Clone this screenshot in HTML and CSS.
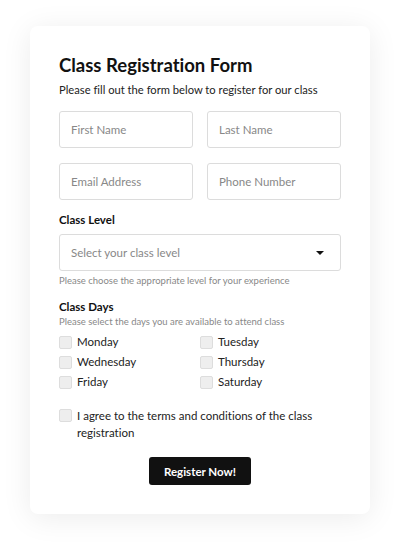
FILE: index.html
```html
<!DOCTYPE html>
<html>
<head>
<meta charset="utf-8">
<link rel="stylesheet" href="styles.css">
</head>
<body>
<div class="page">
  <form class="card">
    <h1 class="title">Class Registration Form</h1>
    <p class="subtitle">Please fill out the form below to register for our class</p>
    <div class="row first">
      <div class="input">First Name</div>
      <div class="input">Last Name</div>
    </div>
    <div class="row">
      <div class="input">Email Address</div>
      <div class="input">Phone Number</div>
    </div>
    <div class="label">Class Level</div>
    <div class="select">
      <span>Select your class level</span>
      <span class="caret"></span>
    </div>
    <div class="help">Please choose the appropriate level for your experience</div>
    <div class="label days-label">Class Days</div>
    <div class="help days-help">Please select the days you are available to attend class</div>
    <div class="days">
      <div class="check"><span class="box"></span><span>Monday</span></div>
      <div class="check"><span class="box"></span><span>Tuesday</span></div>
      <div class="check"><span class="box"></span><span>Wednesday</span></div>
      <div class="check"><span class="box"></span><span>Thursday</span></div>
      <div class="check"><span class="box"></span><span>Friday</span></div>
      <div class="check"><span class="box"></span><span>Saturday</span></div>
    </div>
    <div class="agree"><span class="box"></span><span class="agree-text">I agree to the terms and conditions of the class registration</span></div>
    <div class="actions"><div class="button">Register Now!</div></div>
  </form>
</div>
</body>
</html>
```
FILE: styles.css
```css
* { box-sizing: border-box; }
html, body { margin: 0; padding: 0; background: #ffffff; }
body { font-family: Lato, "Open Sans", sans-serif; color: #111; font-variant-ligatures: none; }
.page { padding: 26px 30px 34px 30px; }
.card {
  width: 340px;
  background: #fff;
  border-radius: 8px;
  box-shadow: 0 4px 30px rgba(0,0,0,0.08);
  padding: 27px 29px 29px 29px;
  display: block;
}
.title { margin: 0; font-size: 18.5px; font-weight: 700; line-height: 24px; color: #111; }
.subtitle { margin: 5px 0 0 0; font-size: 11.2px; line-height: 16px; color: #222; }
.row { display: grid; grid-template-columns: 1fr 1fr; gap: 14px; margin-top: 15px; }
.row.first { margin-top: 13px; }
.input, .select {
  height: 37px;
  border: 1px solid #dcdcdc;
  border-radius: 3px;
  font-size: 11.5px;
  color: #888;
  padding: 0 11px;
  display: flex;
  align-items: center;
}
.label { font-size: 11.5px; font-weight: 700; margin-top: 12px; line-height: 16px; }
.select { margin-top: 6px; justify-content: space-between; }
.caret { width: 0; height: 0; border-left: 4px solid transparent; border-right: 4px solid transparent; border-top: 4px solid #111; margin-right: 5px; }
.help { font-size: 9.5px; color: #888; margin-top: 3px; line-height: 14px; }
.days-label { margin-top: 11px; }
.days-help { margin-top: 0; }
.days { display: grid; grid-template-columns: 1fr 1fr; row-gap: 6px; margin-top: 6px; }
.check { display: flex; align-items: center; gap: 5px; font-size: 11.5px; color: #222; line-height: 14px; }
.box { width: 13px; height: 13px; border: 1px solid #ddd; background: #eee; border-radius: 2px; flex: none; }
.agree { display: flex; gap: 5px; align-items: flex-start; margin-top: 18px; font-size: 11.5px; color: #222; line-height: 17px; }
.agree .box { margin-top: 2px; }
.actions { display: flex; justify-content: center; margin-top: 16px; }
.button { background: #111; color: #fff; font-weight: 700; font-size: 11.5px; height: 28px; width: 102px; border-radius: 3px; display: flex; align-items: center; justify-content: center; }
```
